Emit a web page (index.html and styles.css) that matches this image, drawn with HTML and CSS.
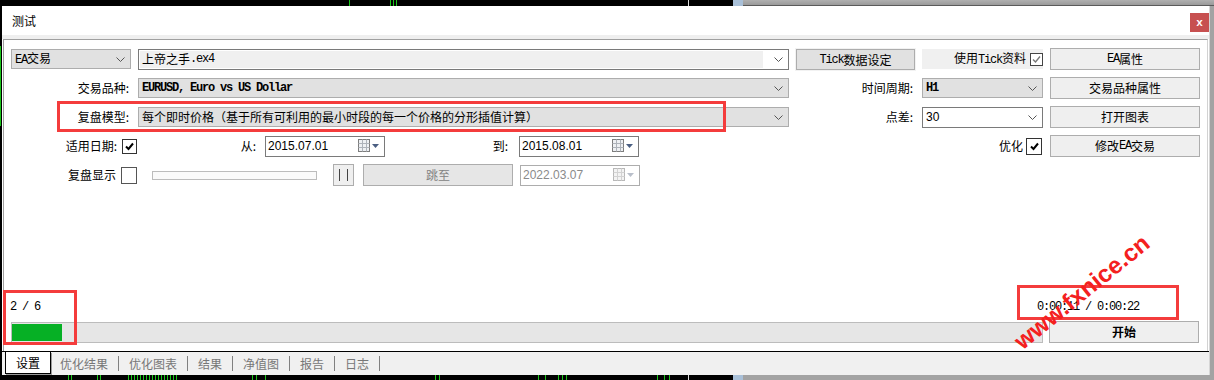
FILE: index.html
```html
<!DOCTYPE html>
<html lang="zh">
<head>
    <meta charset="UTF-8">
    <title>测试</title>
    <link rel="stylesheet" href="styles.css">
</head>
<body>
<div class="screen">
    <div class="chart-top">
        <div class="chart-black"></div>
        <div class="chart-blue"></div>
        <div class="chart-grey"></div>
    </div>

    <div class="middle">
        <div class="chart-left"></div>
        <div class="window">
            <div class="titlebar">
                <span class="title">测试</span>
                <button class="close">x</button>
            </div>

            <div class="panel">
                <div class="form">
                    <!-- row 1 -->
                    <div class="combo"><span class="combo-text"><span class="m">EA</span>交易</span><svg class="chev" width="9" height="5"><polyline points="0.5,0.5 4.5,4.5 8.5,0.5" fill="none" stroke="#555"/></svg></div>
                    <div class="combo combo-edit"><span class="combo-text combo-field">上帝之手<span class="m">.ex4</span></span><svg class="chev" width="9" height="5"><polyline points="0.5,0.5 4.5,4.5 8.5,0.5" fill="none" stroke="#555"/></svg></div>
                    <button class="btn btn-dark"><span class="m">Tick</span>数据设定</button>
                    <div class="tick-box">
                        <span>使用<span class="m">Tick</span>资料</span>
                        <span class="check check-small"><svg width="11" height="11"><path d="M2 5.5 L4.5 8 L9 2.5" fill="none" stroke="#777" stroke-width="1.4"/></svg></span>
                    </div>
                    <button class="btn"><span class="m">EA</span>属性</button>

                    <!-- row 2 -->
                    <div class="lbl">交易品种:</div>
                    <div class="combo"><span class="combo-text m b">EURUSD, Euro vs US Dollar</span><svg class="chev" width="9" height="5"><polyline points="0.5,0.5 4.5,4.5 8.5,0.5" fill="none" stroke="#555"/></svg></div>
                    <div class="lbl">时间周期:</div>
                    <div class="combo"><span class="combo-text m b">H1</span><svg class="chev" width="9" height="5"><polyline points="0.5,0.5 4.5,4.5 8.5,0.5" fill="none" stroke="#555"/></svg></div>
                    <button class="btn">交易品种属性</button>

                    <!-- row 3 -->
                    <div class="lbl">复盘模型:</div>
                    <div class="combo"><span class="combo-text">每个即时价格（基于所有可利用的最小时段的每一个价格的分形插值计算）</span><svg class="chev" width="9" height="5"><polyline points="0.5,0.5 4.5,4.5 8.5,0.5" fill="none" stroke="#555"/></svg></div>
                    <div class="lbl">点差:</div>
                    <div class="combo combo-white"><span class="combo-text num">30</span><svg class="chev" width="9" height="5"><polyline points="0.5,0.5 4.5,4.5 8.5,0.5" fill="none" stroke="#555"/></svg></div>
                    <button class="btn">打开图表</button>

                    <!-- row 4 -->
                    <div class="check-label">
                        <span>适用日期:</span>
                        <span class="check"><svg width="11" height="11"><path d="M2 5.5 L4.5 8 L9 2.5" fill="none" stroke="#000" stroke-width="2"/></svg></span>
                    </div>
                    <div class="dates">
                        <span class="date-lbl date-from">从:</span>
                        <div class="date"><span>2015.07.01</span><svg class="cal" width="22" height="14"><rect x="0.5" y="0.5" width="11" height="12" fill="#eef0f3" stroke="#7d7d7d"/><path d="M0.5 4.5 H11.5 M0.5 8.5 H11.5 M4.5 0.5 V12.5 M8.5 0.5 V12.5" stroke="#aeb3ba"/><path d="M14 5 h7 l-3.5 4 z" fill="#4b5f82"/></svg></div>
                        <span class="date-lbl date-to">到:</span>
                        <div class="date"><span>2015.08.01</span><svg class="cal" width="22" height="14"><rect x="0.5" y="0.5" width="11" height="12" fill="#eef0f3" stroke="#7d7d7d"/><path d="M0.5 4.5 H11.5 M0.5 8.5 H11.5 M4.5 0.5 V12.5 M8.5 0.5 V12.5" stroke="#aeb3ba"/><path d="M14 5 h7 l-3.5 4 z" fill="#4b5f82"/></svg></div>
                    </div>
                    <div></div>
                    <div class="check-label opt">
                        <span>优化</span>
                        <span class="check check-big"><svg width="11" height="11"><path d="M2 5.5 L4.5 8 L9 2.5" fill="none" stroke="#000" stroke-width="2"/></svg></span>
                    </div>
                    <button class="btn">修改<span class="m">EA</span>交易</button>

                    <!-- row 5 -->
                    <div class="check-label">
                        <span>复盘显示</span>
                        <span class="check check-big check-off"></span>
                    </div>
                    <div class="replay">
                        <div class="slider"></div>
                        <button class="btn btn-pause"><svg width="11" height="14"><path d="M1.5 1 V13 M9.5 1 V13" stroke="#444"/></svg></button>
                        <button class="btn btn-off">跳至</button>
                        <div class="date date-off"><span>2022.03.07</span><svg class="cal" width="22" height="14"><rect x="0.5" y="0.5" width="11" height="12" fill="#f3f3f3" stroke="#b8b8b8"/><path d="M0.5 4.5 H11.5 M0.5 8.5 H11.5 M4.5 0.5 V12.5 M8.5 0.5 V12.5" stroke="#d2d2d2"/><path d="M14 5 h7 l-3.5 4 z" fill="#b9bfca"/></svg></div>
                    </div>
                </div>

                <div class="spacer"></div>

                <div class="status">
                    <span class="m pass">2 / 6</span>
                    <span class="m time">0:00:11 / 0:00:22</span>
                </div>

                <div class="progress-row">
                    <div class="progress"><div class="progress-fill" style="width: 4.9%"></div></div>
                    <button class="btn btn-start">开始</button>
                </div>
            </div>

            <div class="tabs">
                <span class="tab active">设置</span>
                <span class="tab">优化结果</span>
                <span class="tab">优化图表</span>
                <span class="tab">结果</span>
                <span class="tab">净值图</span>
                <span class="tab">报告</span>
                <span class="tab">日志</span>
            </div>
        </div>
        <div class="frame-right"></div>
    </div>

    <div class="chart-bottom">
        <div class="chart-black bottom-black"></div>
        <div class="chart-blue"></div>
        <div class="chart-grey bottom-grey"></div>
    </div>

    <div class="mark mark-model"></div>
    <div class="mark mark-pass"></div>
    <div class="mark mark-time"></div>
    <div class="watermark">www.fxnice.cn</div>
</div>
</body>
</html>
```

FILE: styles.css
```css
body {
    margin: 0;
    overflow: hidden;
    font-family: "Noto Sans CJK SC", "Liberation Sans", sans-serif;
    font-size: 12px;
    line-height: 14px;
    color: #000;
    background: #000;
}
button {
    font-family: inherit;
    font-size: 12px;
    line-height: 14px;
    color: #000;
    padding: 0;
    cursor: default;
}
.screen {
    position: relative;
    width: 1214px;
    height: 380px;
    overflow: hidden;
}
.m {
    font-family: "Liberation Mono", monospace;
    font-size: 12px;
    letter-spacing: -1.2px;
}
.b { font-weight: bold; }

/* chart pieces behind the dialog */
.chart-top, .chart-bottom { display: flex; height: 6px; }
.chart-bottom { height: 5px; }
.chart-black {
    width: 733px;
    background-color: #000;
    background-image:
        linear-gradient(90deg, transparent 349px, #19c419 349px 350px, transparent 350px),
        linear-gradient(90deg, transparent 390px, #19c419 390px 391px, transparent 391px 393px, #19c419 393px 394px, transparent 394px 396px, #19c419 396px 397px, transparent 397px),
        linear-gradient(90deg, transparent 688px, #ddd 688px 689px, transparent 689px);
}
.bottom-black {
    background-image:
        linear-gradient(90deg, transparent 68px, #19c419 68px 69px, transparent 69px 71px, #19c419 71px 72px, transparent 72px),
        linear-gradient(90deg, transparent 97px, #19c419 97px 98px, transparent 98px 100px, #19c419 100px 101px, transparent 101px),
        repeating-linear-gradient(90deg, #19c419 0 1px, transparent 1px 3px),
        linear-gradient(90deg, transparent 252px, #19c419 252px 253px, transparent 253px 256px, #19c419 256px 257px, transparent 257px 265px, #19c419 265px 266px, transparent 266px),
        linear-gradient(90deg, transparent 435px, #19c419 435px 436px, transparent 436px 439px, #19c419 439px 440px, transparent 440px),
        linear-gradient(90deg, transparent 538px, #19c419 538px 539px, transparent 539px 545px, #19c419 545px 546px, transparent 546px 558px, #19c419 558px 559px, transparent 559px 562px, #19c419 562px 563px, transparent 563px 566px, #19c419 566px 567px, transparent 567px),
        linear-gradient(90deg, transparent 657px, #19c419 657px 658px, transparent 658px 664px, #19c419 664px 665px, transparent 665px 669px, #19c419 669px 670px, transparent 670px),
        linear-gradient(90deg, transparent 688px, #ddd 688px 689px, transparent 689px);
    background-size: auto, auto, 50px 100%, auto, auto, auto, auto, auto;
    background-position: 0 0, 0 0, 128px 0, 0 0, 0 0, 0 0, 0 0, 0 0;
    background-repeat: no-repeat;
}
.chart-blue { width: 10px; background: #a9c0d8; }
.chart-grey {
    flex: 1;
    background: linear-gradient(#b0b0b0, #9a9a9a);
    border-bottom: 1px solid #5a5a5a;
}
.bottom-grey { border-bottom: none; background: #a3a3a3; }

.middle { display: flex; height: 369px; }
.chart-left {
    width: 2px;
    background: linear-gradient(transparent 40px, #19c419 40px 120px, transparent 120px), #000;
    background-size: 1px 100%;
    background-repeat: no-repeat;
    background-color: #000;
}
.frame-right {
    width: 4px;
    background: #a3a3a3;
    border-left: 1px solid #d6d6d6;
}

/* dialog window */
.window {
    width: 1207px;
    background: #fff;
    display: flex;
    flex-direction: column;
}
.titlebar {
    height: 29px;
    border-bottom: 4px solid #efefef;
    display: flex;
    padding-left: 10px;
}
.title { align-self: center; margin-top: 1px; }
.close {
    margin: 7px 0 0 auto;
    width: 19px;
    height: 19px;
    border: none;
    background: #c75050;
    color: #fff;
    font-family: "Liberation Mono", monospace;
    font-weight: bold;
    font-size: 11px;
}

.panel {
    height: 312px;
    box-sizing: border-box;
    margin: 0 1px;
    border-top: 1px solid #a0a0a0;
    border-left: 1px solid #a0a0a0;
    border-right: 1px solid #d2d2d2;
    padding: 8px 6px 8px 7px;
    display: flex;
    flex-direction: column;
}
.form {
    display: grid;
    grid-template-columns: 120px 651px 119px 121px 150px;
    grid-auto-rows: 22px;
    column-gap: 7px;
    row-gap: 7px;
}
.spacer { flex: 1; }

.lbl {
    display: flex;
    align-items: center;
    justify-content: flex-end;
    padding-right: 2px;
}

.combo {
    align-self: center;
    height: 20px;
    box-sizing: border-box;
    display: flex;
    align-items: center;
    border: 1px solid #adadad;
    background: #e1e1e1;
    padding: 0 5px 0 3px;
    overflow: hidden;
    white-space: nowrap;
}
.combo-text { flex: 1; }
.combo-edit {
    height: 21px;
    border-color: #7a7a7a;
    background: #fff;
    padding: 1px 5px 1px 1px;
}
.combo-field {
    align-self: stretch;
    display: flex;
    align-items: center;
    padding-left: 2px;
    margin-right: 11px;
    background: #f0f0f0;
}
.combo-white { background: #fff; border-color: #7a7a7a; height: 21px; }
.num { font-family: "Liberation Sans", sans-serif; }
.chev { flex: none; }

.btn {
    border: 1px solid #adadad;
    background: #efefef;
    display: flex;
    align-items: center;
    justify-content: center;
    white-space: nowrap;
}
.btn-dark {
    background: #e1e1e1;
    box-shadow: 0 0 0 1px #f2f2f2;
    height: 21px;
    margin-top: 1px;
}
.btn-off { background: #e6e6e6; color: #838383; }
.btn-start { font-weight: bold; }

.tick-box {
    align-self: center;
    height: 20px;
    background: #f0f0f0;
    display: flex;
    align-items: center;
    justify-content: flex-end;
    gap: 4px;
}
.check {
    width: 15px;
    height: 15px;
    box-sizing: border-box;
    border: 1px solid #333;
    background: #fff;
    display: flex;
    align-items: center;
    justify-content: center;
}
.check-small { width: 13px; height: 13px; border-color: #444; }
.check-big { width: 16px; height: 17px; }
.check-off { border-color: #555; }

.check-label {
    display: flex;
    align-items: center;
    justify-content: flex-end;
    gap: 5px;
    margin-right: -6px;
}
.check-label.opt { margin-right: 1px; gap: 3px; }

.dates { display: flex; align-items: center; }
.date-lbl { text-align: right; box-sizing: border-box; }
.date-from { width: 127px; padding-right: 9px; }
.date-to { width: 134px; padding-right: 11px; }
.date {
    width: 120px;
    height: 21px;
    box-sizing: border-box;
    border: 1px solid #7a7a7a;
    background: #fff;
    display: flex;
    align-items: center;
    justify-content: space-between;
    padding: 0 4px 0 2px;
    font-family: "Liberation Sans", sans-serif;
}
.date-off { border-color: #adadad; color: #8a8a8a; }

.replay { display: flex; align-items: center; }
.slider {
    margin-left: 14px;
    width: 165px;
    height: 9px;
    box-sizing: border-box;
    border: 1px solid #bcbcbc;
    background: #fafafa;
}
.btn-pause { margin-left: 16px; width: 21px; height: 22px; }
.replay .btn-off { margin-left: 9px; width: 150px; height: 22px; }
.replay .date { margin-left: 7px; }

.status {
    display: flex;
    height: 14px;
    margin-bottom: 7px;
    align-items: center;
}
.pass { margin-left: -1px; }
.time { margin-left: auto; margin-right: 62px; }

.progress-row {
    display: grid;
    grid-template-columns: 1032px 150px;
    column-gap: 6px;
    height: 22px;
}
.progress {
    align-self: center;
    height: 21px;
    box-sizing: border-box;
    border: 1px solid #bcbcbc;
    background: #e6e6e6;
    padding: 1px 0;
}
.progress-fill { height: 100%; background: #06b025; }

/* bottom tabs */
.tabs {
    height: 24px;
    box-sizing: border-box;
    border-top: 1px solid #000;
    background: #f0f0f0;
    display: flex;
    align-items: flex-start;
    padding-left: 3px;
}
.tab {
    margin-top: 4px;
    height: 15px;
    line-height: 15px;
    padding: 0 10px;
    border-right: 1px solid #808080;
    color: #777;
}
.tab.active {
    margin: 0 -1px 0 0;
    height: 22px;
    line-height: 22px;
    width: 46px;
    box-sizing: border-box;
    text-align: center;
    padding: 0;
    background: #fff;
    color: #000;
    border: 1px solid #000;
    border-top: none;
    box-shadow: 1px 1px 0 #9a9a9a;
}
.tab.active + .tab { margin-left: 1px; padding-left: 9px; }

/* red annotations drawn over the screenshot */
.mark {
    position: absolute;
    box-sizing: border-box;
    border: 3px solid #f43c3c;
}
.mark-model { left: 57px; top: 101px; width: 669px; height: 31px; }
.mark-pass { left: 3px; top: 290px; width: 74px; height: 55px; }
.mark-time { left: 1017px; top: 285px; width: 162px; height: 35px; }

.watermark {
    position: absolute;
    left: 1082px;
    top: 292px;
    transform: translate(-50%, -50%) rotate(-39deg);
    font-family: "Liberation Sans", sans-serif;
    font-weight: bold;
    font-size: 24px;
    line-height: 24px;
    color: #f42020;
    white-space: nowrap;
}
```
